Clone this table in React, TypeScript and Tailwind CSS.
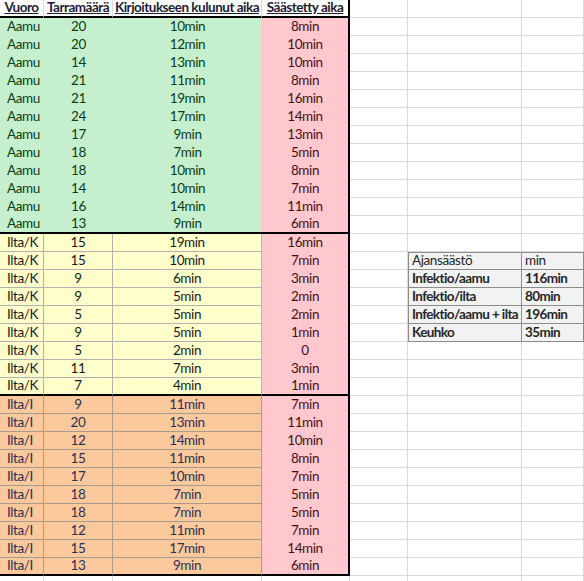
import React from "react";

type Row = { shift: string; labels: number; writing: string; saved: string };

const green: [number, string, string][] = [
  [20, "10min", "8min"],
  [20, "12min", "10min"],
  [14, "13min", "10min"],
  [21, "11min", "8min"],
  [21, "19min", "16min"],
  [24, "17min", "14min"],
  [17, "9min", "13min"],
  [18, "7min", "5min"],
  [18, "10min", "8min"],
  [14, "10min", "7min"],
  [16, "14min", "11min"],
  [13, "9min", "6min"],
];

const yellow: [number, string, string][] = [
  [15, "19min", "16min"],
  [15, "10min", "7min"],
  [9, "6min", "3min"],
  [9, "5min", "2min"],
  [5, "5min", "2min"],
  [9, "5min", "1min"],
  [5, "2min", "0"],
  [11, "7min", "3min"],
  [7, "4min", "1min"],
];

const orange: [number, string, string][] = [
  [9, "11min", "7min"],
  [20, "13min", "11min"],
  [12, "14min", "10min"],
  [15, "11min", "8min"],
  [17, "10min", "7min"],
  [18, "7min", "5min"],
  [18, "7min", "5min"],
  [12, "11min", "7min"],
  [15, "17min", "14min"],
  [13, "9min", "6min"],
];

const toRows = (shift: string, list: [number, string, string][]): Row[] =>
  list.map(([labels, writing, saved]) => ({ shift, labels, writing, saved }));

const rows: Row[] = [
  ...toRows("Aamu", green),
  ...toRows("Ilta/K", yellow),
  ...toRows("Ilta/I", orange),
];

// summary table sits next to data rows 13..17
const summary: Record<number, [string, string, boolean]> = {
  13: ["Ajansäästö", "min", false],
  14: ["Infektio/aamu", "116min", true],
  15: ["Infektio/ilta", "80min", true],
  16: ["Infektio/aamu + ilta", "196min", true],
  17: ["Keuhko", "35min", true],
};

const grid =
  "grid grid-cols-[44px_69px_149px_88px_58px_114px_62px] h-[18px]";
const cell = "h-[18px] flex items-center whitespace-nowrap overflow-visible";

const EmptyCell = () => (
  <div className={`${cell} border-r border-b border-[#d9d9d9]`} />
);

const App = () => {
  return (
    <div className="w-[584px] h-[581px] overflow-hidden bg-white font-['Lato',sans-serif] text-[13.5px] tracking-[-0.4px] leading-none">
      {/* header */}
      <div className={grid}>
        {["Vuoro", "Tarramäärä", "Kirjoitukseen kulunut aika"].map((h) => (
          <div
            key={h}
            className={`${cell} justify-center font-bold underline tracking-[-0.5px] text-[#1c1c33] border-r border-[#d9d9d9] border-b-2 border-b-black`}
          >
            {h}
          </div>
        ))}
        <div
          className={`${cell} justify-center font-bold underline tracking-[-0.5px] text-[#1c1c33] border-b-2 border-r-2 border-black`}
        >
          Säästetty aika
        </div>
        <EmptyCell />
        <EmptyCell />
        <EmptyCell />
      </div>

      {rows.map((r, i) => {
        const isGreen = i < 12;
        const isYellow = i >= 12 && i < 21;
        const sectionEnd = i === 11 || i === 20 || i === 30;
        const fill = isGreen
          ? "bg-[#c6efce] text-[#0b3d12]"
          : isYellow
          ? "bg-[#ffffcc] text-[#1a1a1a] border-r border-b border-[#b2b2b2]"
          : "bg-[#fcc99c] text-[#2e2e55] border-r border-b border-[#a89a8c]";
        const end = sectionEnd ? "border-b-2 border-b-black" : "";
        const s = summary[i];
        return (
          <div key={i} className={grid}>
            <div className={`${cell} pl-[7px] ${fill} ${end}`}>{r.shift}</div>
            <div className={`${cell} justify-center ${fill} ${end}`}>
              {r.labels}
            </div>
            <div className={`${cell} justify-center ${fill} ${end}`}>
              {r.writing}
            </div>
            <div
              className={`${cell} justify-center bg-[#ffc7ce] text-[#4a0f14] border-r-2 border-black ${
                sectionEnd ? "border-b-2" : ""
              }`}
            >
              {r.saved}
            </div>
            <EmptyCell />
            {s ? (
              <>
                <div
                  className={`${cell} pl-[3px] bg-[#f2f2f2] text-[#262626] border border-[#8c8c8c] ${
                    s[2] ? "font-bold tracking-[-0.6px]" : ""
                  } ${i > 13 ? "border-t-0" : ""}`}
                >
                  {s[0]}
                </div>
                <div
                  className={`${cell} pl-[3px] bg-[#f2f2f2] text-[#262626] border border-l-0 border-[#8c8c8c] ${
                    s[2] ? "font-bold tracking-[-0.6px]" : ""
                  } ${i > 13 ? "border-t-0" : ""}`}
                >
                  {s[1]}
                </div>
              </>
            ) : (
              <>
                <EmptyCell />
                <EmptyCell />
              </>
            )}
          </div>
        );
      })}

      <div className={grid}>
        {[0, 1, 2, 3, 4, 5, 6].map((k) => (
          <EmptyCell key={k} />
        ))}
      </div>
    </div>
  );
};

export default App;
